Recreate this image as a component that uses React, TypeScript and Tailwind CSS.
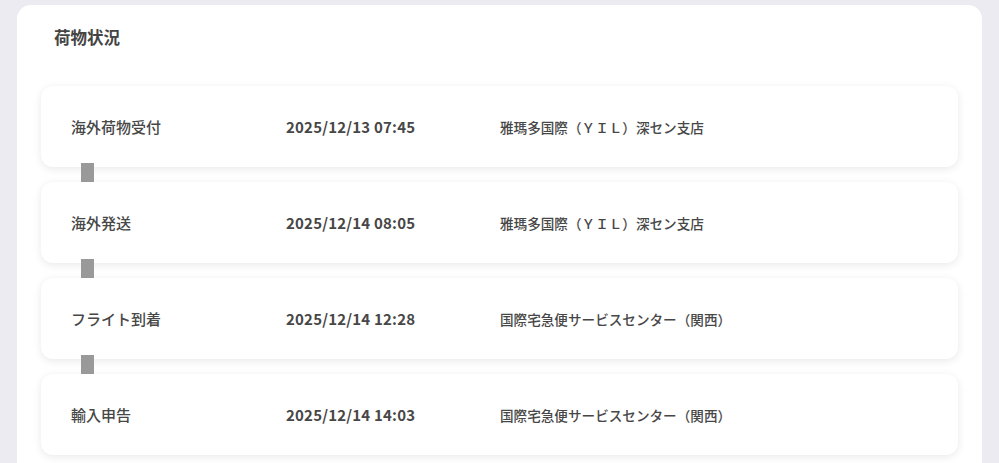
import React from 'react';

const steps = [
  { label: '海外荷物受付', time: '2025/12/13 07:45', place: '雅瑪多国際（ＹＩＬ）深セン支店' },
  { label: '海外発送', time: '2025/12/14 08:05', place: '雅瑪多国際（ＹＩＬ）深セン支店' },
  { label: 'フライト到着', time: '2025/12/14 12:28', place: '国際宅急便サービスセンター（関西）' },
  { label: '輸入申告', time: '2025/12/14 14:03', place: '国際宅急便サービスセンター（関西）' },
];

const font = "font-['Noto_Sans_CJK_JP','Noto_Sans',sans-serif]";

export default function App() {
  return (
    <div className={`h-[463px] overflow-hidden bg-[#ebebf1] pl-[17px] pr-[17px] pt-[5px] ${font}`}>
      <div className="h-[500px] rounded-[14px] bg-white px-6 pt-[20px]">
        {/* Title */}
        <h2 className="pl-[13px] text-[16.5px] leading-[24px] font-semibold text-[#444]">荷物状況</h2>

        {/* Timeline rows */}
        <div className="mt-[37px] flex flex-col gap-[15px]">
          {steps.map((s, i) => (
            <div key={i} className="relative">
              <div className="flex h-[81px] items-center rounded-xl bg-white pl-[30px] pt-px text-[#474747] shadow-[0_2px_8px_rgba(0,0,0,0.09)]">
                <span className="w-[215px] text-[15px] font-medium">{s.label}</span>
                <span className="w-[214px] text-[15px] font-semibold tracking-[0.2px]">{s.time}</span>
                <span className="text-[13.6px] font-medium">{s.place}</span>
              </div>
              {i < steps.length - 1 && (
                <div className="absolute left-[40px] top-[calc(100%-4px)] z-10 h-[19px] w-[13px] bg-[#999]" />
              )}
            </div>
          ))}
        </div>
      </div>
    </div>
  );
}
